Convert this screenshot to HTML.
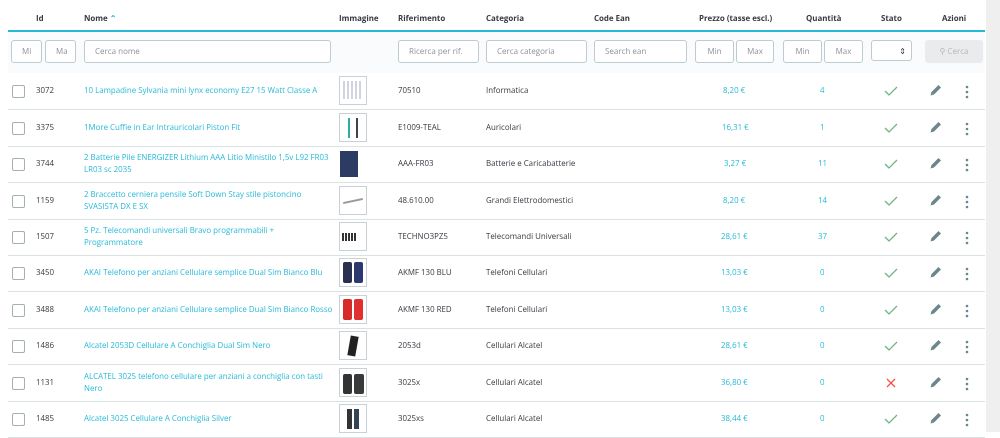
<!DOCTYPE html>
<html><head><meta charset="utf-8"><style>
*{box-sizing:border-box;margin:0;padding:0}
body{width:1000px;height:432px;overflow:hidden;background:#fff;font-family:"Open Sans","Liberation Sans",sans-serif;font-size:7.9px;color:#363a41;position:relative}
.a{position:absolute;white-space:nowrap}
.h{font-weight:bold;font-size:7.9px;top:14px}
.sb{position:absolute;left:986px;top:0;width:14px;height:432px;background:#efefef}
.fl{position:absolute;left:8px;top:30px;width:977px;height:43px;background:#fafbfc;border-top:2px solid #25b9d7}
.in{position:absolute;top:40px;height:23px;border:1px solid #bbcdd2;border-radius:3px;background:#fff;color:#8a9296;font-size:8px;line-height:21px;padding-left:10px;overflow:hidden;white-space:nowrap}
.c{text-align:center;padding-left:0}
.row{position:absolute;left:8px;width:977px;height:37px;border-bottom:1px solid #dbe2e4}
.cb{position:absolute;left:4px;top:12px;width:13px;height:13px;border:1.3px solid #a6b0b4;border-radius:2px;background:#fff}
.t{position:absolute;line-height:12px;white-space:nowrap}
.lk{color:#25b9d7}
.img{position:absolute;left:331px;top:3px;width:28px;height:29px;border:1px solid #c8d2d6;background:#fff;overflow:hidden}
.ok{position:absolute;left:876px;top:12px}
.pen{position:absolute;left:921px;top:11px}
.dots{position:absolute;left:956px;top:12px}
</style></head><body>
<div class="sb"></div>
<div class="a h" style="left:36px">Id</div>
<div class="a h" style="left:84px">Nome <span style="color:#25b9d7">&#8963;</span></div>
<div class="a h" style="left:339px">Immagine</div>
<div class="a h" style="left:398px">Riferimento</div>
<div class="a h" style="left:486px">Categoria</div>
<div class="a h" style="left:594px">Code Ean</div>
<div class="a h" style="left:699px">Prezzo (tasse escl.)</div>
<div class="a h" style="left:806px">Quantità</div>
<div class="a h" style="left:881px">Stato</div>
<div class="a h" style="left:942px">Azioni</div>
<div class="fl"></div>
<div class="in" style="left:11px;width:31px">Mi</div>
<div class="in" style="left:45px;width:31px">Ma</div>
<div class="in" style="left:84px;width:247px">Cerca nome</div>
<div class="in" style="left:398px;width:81px">Ricerca per rif.</div>
<div class="in" style="left:486px;width:101px">Cerca categoria</div>
<div class="in" style="left:594px;width:93px">Search ean</div>
<div class="in c" style="left:695px;width:39px">Min</div>
<div class="in c" style="left:736px;width:38px">Max</div>
<div class="in c" style="left:783px;width:39px">Min</div>
<div class="in c" style="left:824px;width:39px">Max</div>
<div class="in" style="left:871px;width:41px;height:21px;text-align:right;padding-right:5px;color:#363a41">&#8661;</div>
<div class="in c" style="left:925px;width:58px;background:#eaebec;border-color:#eaebec;color:#b3b7ba">&#9906; Cerca</div>

<div class="row" style="top:73px"><div class="cb"></div><div class="t" style="left:28px;top:12px">3072</div><div class="t lk" style="left:76px;top:12px">10 Lampadine Sylvania mini lynx economy E27 15 Watt Classe A</div><div class="img"><div style="margin:4px 3px;height:18px;background:repeating-linear-gradient(90deg,#cfd4e0 0 2px,#fff 2px 4px)"></div></div><div class="t" style="left:390px;top:12px">70510</div><div class="t" style="left:478px;top:12px">Informatica</div><div class="t lk" style="left:715px;top:12px">8,20 €</div><div class="t lk" style="left:812px;top:12px">4</div><svg class="ok" width="14" height="12"><path d="M1 6l4 4 8-8" stroke="#70b580" stroke-width="1.3" fill="none"/></svg><svg class="pen" width="13" height="13"><path d="M1.5 11.5l1-3.5 7-7 2.5 2.5-7 7z" fill="#6c868e"/></svg><svg class="dots" width="6" height="14"><circle cx="3" cy="2" r="1.3" fill="#6c868e"/><circle cx="3" cy="7" r="1.3" fill="#6c868e"/><circle cx="3" cy="12" r="1.3" fill="#6c868e"/></svg></div>

<div class="row" style="top:110px"><div class="cb"></div><div class="t" style="left:28px;top:12px">3375</div><div class="t lk" style="left:76px;top:12px">1More Cuffie in Ear Intrauricolari Piston Fit</div><div class="img"><div style="margin:4px 8px;width:10px;height:20px;border-left:2px solid #3aa;border-right:2px solid #444"></div></div><div class="t" style="left:390px;top:12px">E1009-TEAL</div><div class="t" style="left:478px;top:12px">Auricolari</div><div class="t lk" style="left:714px;top:12px">16,31 €</div><div class="t lk" style="left:812px;top:12px">1</div><svg class="ok" width="14" height="12"><path d="M1 6l4 4 8-8" stroke="#70b580" stroke-width="1.3" fill="none"/></svg><svg class="pen" width="13" height="13"><path d="M1.5 11.5l1-3.5 7-7 2.5 2.5-7 7z" fill="#6c868e"/></svg><svg class="dots" width="6" height="14"><circle cx="3" cy="2" r="1.3" fill="#6c868e"/><circle cx="3" cy="7" r="1.3" fill="#6c868e"/><circle cx="3" cy="12" r="1.3" fill="#6c868e"/></svg></div>

<div class="row" style="top:146px"><div class="cb"></div><div class="t" style="left:28px;top:12px">3744</div><div class="t lk" style="left:76px;top:6px">2 Batterie Pile ENERGIZER Lithium AAA Litio Ministilo 1,5v L92 FR03<br>LR03 sc 2035</div><div class="img" style="border:none"><div style="margin:2px 1px;width:18px;height:26px;background:#2b3b63"></div></div><div class="t" style="left:390px;top:12px">AAA-FR03</div><div class="t" style="left:478px;top:12px">Batterie e Caricabatterie</div><div class="t lk" style="left:716px;top:12px">3,27 €</div><div class="t lk" style="left:810px;top:12px">11</div><svg class="ok" width="14" height="12"><path d="M1 6l4 4 8-8" stroke="#70b580" stroke-width="1.3" fill="none"/></svg><svg class="pen" width="13" height="13"><path d="M1.5 11.5l1-3.5 7-7 2.5 2.5-7 7z" fill="#6c868e"/></svg><svg class="dots" width="6" height="14"><circle cx="3" cy="2" r="1.3" fill="#6c868e"/><circle cx="3" cy="7" r="1.3" fill="#6c868e"/><circle cx="3" cy="12" r="1.3" fill="#6c868e"/></svg></div>

<div class="row" style="top:183px"><div class="cb"></div><div class="t" style="left:28px;top:12px">1159</div><div class="t lk" style="left:76px;top:6px">2 Braccetto cerniera pensile Soft Down Stay stile pistoncino<br>SVASISTA DX E SX</div><div class="img"><div style="margin:13px 3px;width:20px;height:2px;background:#999;transform:rotate(-12deg)"></div></div><div class="t" style="left:390px;top:12px">48.610.00</div><div class="t" style="left:478px;top:12px">Grandi Elettrodomestici</div><div class="t lk" style="left:715px;top:12px">8,20 €</div><div class="t lk" style="left:810px;top:12px">14</div><svg class="ok" width="14" height="12"><path d="M1 6l4 4 8-8" stroke="#70b580" stroke-width="1.3" fill="none"/></svg><svg class="pen" width="13" height="13"><path d="M1.5 11.5l1-3.5 7-7 2.5 2.5-7 7z" fill="#6c868e"/></svg><svg class="dots" width="6" height="14"><circle cx="3" cy="2" r="1.3" fill="#6c868e"/><circle cx="3" cy="7" r="1.3" fill="#6c868e"/><circle cx="3" cy="12" r="1.3" fill="#6c868e"/></svg></div>

<div class="row" style="top:219px"><div class="cb"></div><div class="t" style="left:28px;top:12px">1507</div><div class="t lk" style="left:76px;top:6px">5 Pz. Telecomandi universali Bravo programmabili +<br>Programmatore</div><div class="img"><div style="margin:10px 2px;width:14px;height:8px;background:repeating-linear-gradient(90deg,#333 0 2px,#fff 2px 3px)"></div></div><div class="t" style="left:390px;top:12px">TECHNO3PZ5</div><div class="t" style="left:478px;top:12px">Telecomandi Universali</div><div class="t lk" style="left:713px;top:12px">28,61 €</div><div class="t lk" style="left:810px;top:12px">37</div><svg class="ok" width="14" height="12"><path d="M1 6l4 4 8-8" stroke="#70b580" stroke-width="1.3" fill="none"/></svg><svg class="pen" width="13" height="13"><path d="M1.5 11.5l1-3.5 7-7 2.5 2.5-7 7z" fill="#6c868e"/></svg><svg class="dots" width="6" height="14"><circle cx="3" cy="2" r="1.3" fill="#6c868e"/><circle cx="3" cy="7" r="1.3" fill="#6c868e"/><circle cx="3" cy="12" r="1.3" fill="#6c868e"/></svg></div>

<div class="row" style="top:255px"><div class="cb"></div><div class="t" style="left:28px;top:12px">3450</div><div class="t lk" style="left:76px;top:12px">AKAI Telefono per anziani Cellulare semplice Dual Sim Bianco Blu</div><div class="img"><div style="position:absolute;left:3px;top:3px;width:9px;height:21px;background:#2a3050;border-radius:2px"></div><div style="position:absolute;left:14px;top:3px;width:9px;height:21px;background:#2a3a70;border-radius:2px"></div></div><div class="t" style="left:390px;top:12px">AKMF 130 BLU</div><div class="t" style="left:478px;top:12px">Telefoni Cellulari</div><div class="t lk" style="left:713px;top:12px">13,03 €</div><div class="t lk" style="left:812px;top:12px">0</div><svg class="ok" width="14" height="12"><path d="M1 6l4 4 8-8" stroke="#70b580" stroke-width="1.3" fill="none"/></svg><svg class="pen" width="13" height="13"><path d="M1.5 11.5l1-3.5 7-7 2.5 2.5-7 7z" fill="#6c868e"/></svg><svg class="dots" width="6" height="14"><circle cx="3" cy="2" r="1.3" fill="#6c868e"/><circle cx="3" cy="7" r="1.3" fill="#6c868e"/><circle cx="3" cy="12" r="1.3" fill="#6c868e"/></svg></div>

<div class="row" style="top:292px"><div class="cb"></div><div class="t" style="left:28px;top:12px">3488</div><div class="t lk" style="left:76px;top:12px">AKAI Telefono per anziani Cellulare semplice Dual Sim Bianco Rosso</div><div class="img"><div style="position:absolute;left:3px;top:3px;width:9px;height:21px;background:#d82a2a;border-radius:2px"></div><div style="position:absolute;left:14px;top:3px;width:9px;height:21px;background:#e03030;border-radius:2px"></div></div><div class="t" style="left:390px;top:12px">AKMF 130 RED</div><div class="t" style="left:478px;top:12px">Telefoni Cellulari</div><div class="t lk" style="left:713px;top:12px">13,03 €</div><div class="t lk" style="left:812px;top:12px">0</div><svg class="ok" width="14" height="12"><path d="M1 6l4 4 8-8" stroke="#70b580" stroke-width="1.3" fill="none"/></svg><svg class="pen" width="13" height="13"><path d="M1.5 11.5l1-3.5 7-7 2.5 2.5-7 7z" fill="#6c868e"/></svg><svg class="dots" width="6" height="14"><circle cx="3" cy="2" r="1.3" fill="#6c868e"/><circle cx="3" cy="7" r="1.3" fill="#6c868e"/><circle cx="3" cy="12" r="1.3" fill="#6c868e"/></svg></div>

<div class="row" style="top:328px"><div class="cb"></div><div class="t" style="left:28px;top:12px">1486</div><div class="t lk" style="left:76px;top:12px">Alcatel 2053D Cellulare A Conchiglia Dual Sim Nero</div><div class="img"><div style="position:absolute;left:9px;top:4px;width:8px;height:20px;background:#222;transform:rotate(10deg)"></div></div><div class="t" style="left:390px;top:12px">2053d</div><div class="t" style="left:478px;top:12px">Cellulari Alcatel</div><div class="t lk" style="left:713px;top:12px">28,61 €</div><div class="t lk" style="left:812px;top:12px">0</div><svg class="ok" width="14" height="12"><path d="M1 6l4 4 8-8" stroke="#70b580" stroke-width="1.3" fill="none"/></svg><svg class="pen" width="13" height="13"><path d="M1.5 11.5l1-3.5 7-7 2.5 2.5-7 7z" fill="#6c868e"/></svg><svg class="dots" width="6" height="14"><circle cx="3" cy="2" r="1.3" fill="#6c868e"/><circle cx="3" cy="7" r="1.3" fill="#6c868e"/><circle cx="3" cy="12" r="1.3" fill="#6c868e"/></svg></div>

<div class="row" style="top:365px"><div class="cb"></div><div class="t" style="left:28px;top:12px">1131</div><div class="t lk" style="left:76px;top:6px">ALCATEL 3025 telefono cellulare per anziani a conchiglia con tasti<br>Nero</div><div class="img"><div style="position:absolute;left:3px;top:5px;width:9px;height:20px;background:#333;border-radius:2px"></div><div style="position:absolute;left:14px;top:5px;width:10px;height:20px;background:#3a3a3a;border-radius:2px"></div></div><div class="t" style="left:390px;top:12px">3025x</div><div class="t" style="left:478px;top:12px">Cellulari Alcatel</div><div class="t lk" style="left:713px;top:12px">36,80 €</div><div class="t lk" style="left:812px;top:12px">0</div><svg class="ok" width="14" height="12"><path d="M3 2l8 8M11 2l-8 8" stroke="#f54c3e" stroke-width="1.3" fill="none"/></svg><svg class="pen" width="13" height="13"><path d="M1.5 11.5l1-3.5 7-7 2.5 2.5-7 7z" fill="#6c868e"/></svg><svg class="dots" width="6" height="14"><circle cx="3" cy="2" r="1.3" fill="#6c868e"/><circle cx="3" cy="7" r="1.3" fill="#6c868e"/><circle cx="3" cy="12" r="1.3" fill="#6c868e"/></svg></div>

<div class="row" style="top:401px"><div class="cb"></div><div class="t" style="left:28px;top:12px">1485</div><div class="t lk" style="left:76px;top:12px">Alcatel 3025 Cellulare A Conchiglia Silver</div><div class="img"><div style="position:absolute;left:7px;top:4px;width:5px;height:20px;background:#333"></div><div style="position:absolute;left:14px;top:4px;width:5px;height:20px;background:#345"></div></div><div class="t" style="left:390px;top:12px">3025xs</div><div class="t" style="left:478px;top:12px">Cellulari Alcatel</div><div class="t lk" style="left:713px;top:12px">38,44 €</div><div class="t lk" style="left:812px;top:12px">0</div><svg class="ok" width="14" height="12"><path d="M1 6l4 4 8-8" stroke="#70b580" stroke-width="1.3" fill="none"/></svg><svg class="pen" width="13" height="13"><path d="M1.5 11.5l1-3.5 7-7 2.5 2.5-7 7z" fill="#6c868e"/></svg><svg class="dots" width="6" height="14"><circle cx="3" cy="2" r="1.3" fill="#6c868e"/><circle cx="3" cy="7" r="1.3" fill="#6c868e"/><circle cx="3" cy="12" r="1.3" fill="#6c868e"/></svg></div>
</body></html>
